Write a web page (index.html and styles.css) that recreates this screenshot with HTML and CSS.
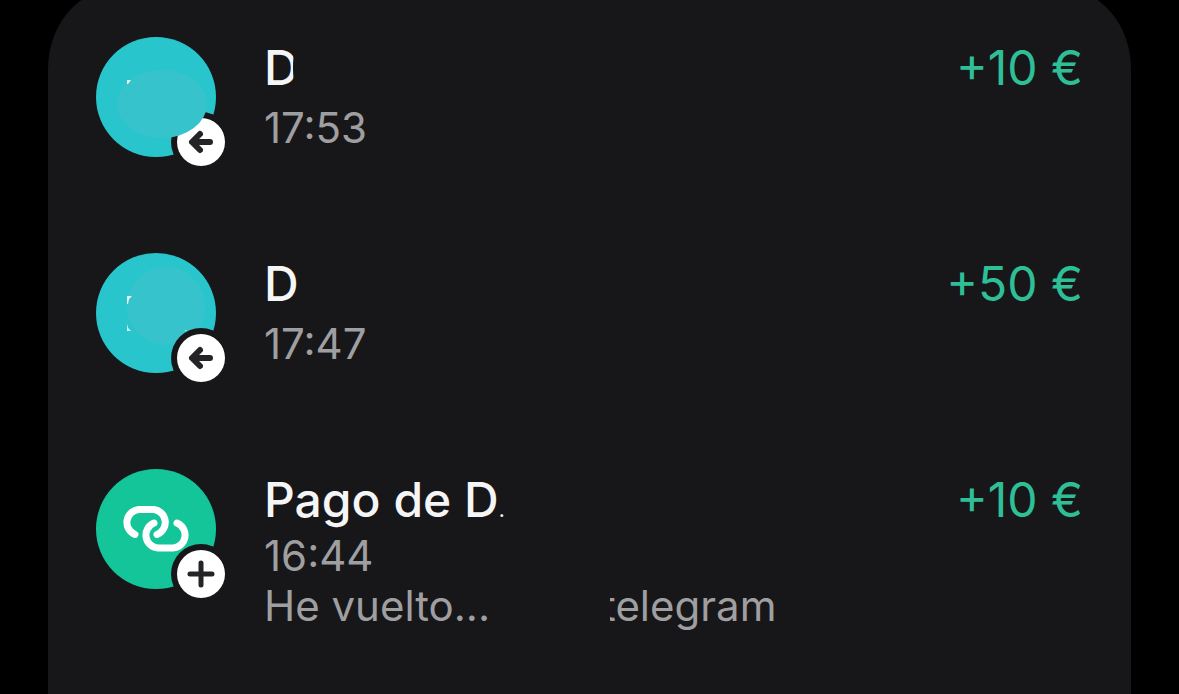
FILE: index.html
```html
<!DOCTYPE html>
<html lang="es">
  <head>
    <meta charset="UTF-8" />
    <meta name="viewport" content="width=device-width, initial-scale=1.0" />
    <title>Movimientos</title>
    <link rel="stylesheet" href="styles.css">
  </head>
  <body>
    <ul class="transactions">
      <li class="transaction">
        <svg class="avatar" viewBox="0 0 120 120" aria-hidden="true">
          <circle class="person" cx="60" cy="60" r="60" />
          <circle class="ring" cx="105" cy="105" r="30" />
          <circle class="badge" cx="105" cy="105" r="24" />
          <ellipse class="smudge" cx="66" cy="67" rx="45" ry="34" />
          <path class="initial" d="M31 43h4l-3 4h-1z" />
          <path class="badge-icon arrow" d="M104 97l-8 8 8 8M97 105h17" />
        </svg>
        <div class="details">
          <h2><span class="cut-right">D</span></h2>
          <p class="time">17:53</p>
        </div>
        <p class="amount">+10 €</p>
      </li>
      <li class="transaction">
        <svg class="avatar" viewBox="0 0 120 120" aria-hidden="true">
          <circle class="person" cx="60" cy="60" r="60" />
          <circle class="smudge" cx="70" cy="53" r="39" />
          <path class="initial" d="M31 43h5l-3 3-1 5h-1zM31 71l1 4 3 3h-4zM89 77l2 1h-2z" />
          <circle class="ring" cx="105" cy="105" r="30" />
          <circle class="badge" cx="105" cy="105" r="24" />
          <path class="badge-icon arrow" d="M104 97l-8 8 8 8M97 105h17" />
        </svg>
        <div class="details">
          <h2>D</h2>
          <p class="time">17:47</p>
        </div>
        <p class="amount">+50 €</p>
      </li>
      <li class="transaction with-note">
        <svg class="avatar" viewBox="0 0 120 120" aria-hidden="true">
          <circle class="link" cx="60" cy="60" r="60" />
          <path class="link-icon" d="M39 65.5A13 13 0 0 1 43 40.5H58A13 13 0 0 1 61 65.5M58 54A13 13 0 0 0 62 79H77A13 13 0 0 0 81 54" />
          <circle class="ring" cx="105" cy="105" r="30" />
          <circle class="badge" cx="105" cy="105" r="24" />
          <path class="badge-icon" d="M94 105h22M105 94v22" />
        </svg>
        <div class="details">
          <h2>Pago de D<span class="dot">.</span></h2>
          <p class="time">16:44</p>
          <p class="note"><span>He vuelto...</span><span class="cut-left">telegram</span></p>
        </div>
        <p class="amount">+10 €</p>
      </li>
    </ul>
  </body>
</html>
```
FILE: styles.css
```css
* {
  box-sizing: border-box;
}
body {
  margin: 0;
  background: #000;
  color: #f5f5f6;
  font-family: Inter, "Liberation Sans", sans-serif;
  font-size: 42px;
  line-height: 50px;
  overflow: hidden;
}
h2,
p {
  margin: 0;
}
/* the card starts just above the top of the window */
.transactions {
  list-style: none;
  margin: -11px 48px 0;
  padding: 0;
  min-height: calc(100vh + 11px);
  background: #17171a;
  border-radius: 68px 68px 0 0 / 80px 80px 0 0;
}
.transaction {
  display: flex;
  align-items: flex-start;
  gap: 48px;
  min-height: 216px;
  padding: 48px;
}
.avatar {
  flex: none;
  width: 120px;
  height: 120px;
  overflow: visible;
}
.person {
  fill: #28c6cc;
}
.smudge {
  fill: #37c3cc;
}
.initial {
  fill: #e8fbfb;
}
.link {
  fill: #14c59a;
}
.link-icon {
  fill: none;
  stroke: #fff;
  stroke-width: 7;
  stroke-linecap: round;
}
.ring {
  fill: #17171a;
}
.badge {
  fill: #fff;
}
.badge-icon {
  fill: none;
  stroke: #242426;
  stroke-width: 5;
  stroke-linecap: round;
  stroke-linejoin: round;
}
.arrow {
  stroke-width: 6;
}
.details {
  flex: 1;
  display: flex;
  flex-direction: column;
  gap: 4px;
}
.with-note .details {
  gap: 0;
}
h2,
.amount {
  font-size: 48px;
  line-height: 62px;
}
h2 {
  font-weight: 500;
}
.dot {
  font-size: 20px;
  line-height: 20px;
}
.time,
.note {
  color: #9f9fa1;
}
.note {
  display: flex;
  gap: 112px;
}
.amount {
  color: #2fbf97;
  white-space: nowrap;
}
/* strips that hide part of a letter */
.cut-right,
.cut-left {
  position: relative;
}
.cut-right::after,
.cut-left::before {
  content: "";
  position: absolute;
  top: 0;
  bottom: 0;
  background: #17171a;
}
.cut-right::after {
  right: -6px;
  width: 12px;
  border-radius: 50%;
}
.cut-left::before {
  left: 0;
  width: 8px;
}
```
